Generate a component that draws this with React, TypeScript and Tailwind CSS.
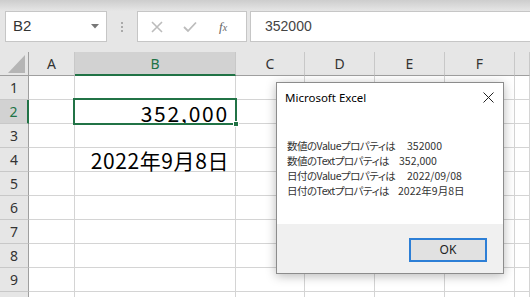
import React from "react";

const cols = [
  { name: "A", w: "w-[46px]" },
  { name: "B", w: "w-[161px]" },
  { name: "C", w: "w-[69px]" },
  { name: "D", w: "w-[70px]" },
  { name: "E", w: "w-[70px]" },
  { name: "F", w: "w-[70px]" },
  { name: "", w: "flex-1" },
];

const rows = [1, 2, 3, 4, 5, 6, 7, 8, 9, 10];

function Cell({ r, c }: { r: number; c: number }) {
  const col = cols[c];
  let content: React.ReactNode = null;
  if (r === 2 && c === 1) {
    content = (
      <>
        <span className="absolute right-[6px] top-[-2px] text-[21px] tracking-[1.8px] text-black [font-family:'Noto_Sans_CJK_JP',sans-serif]">
          352,000
        </span>
        <div className="absolute z-10 left-[-2px] top-[-2px] right-[-2px] bottom-[-2px] border-2 border-[#217346]" />
        <div className="absolute z-20 right-[-4px] bottom-[-4px] w-[6px] h-[6px] bg-[#217346] border border-white" />
      </>
    );
  }
  if (r === 4 && c === 1) {
    content = (
      <span className="absolute right-[6px] top-[-3px] text-[21px] tracking-[0.6px] text-black [font-family:'Noto_Sans_CJK_JP',sans-serif]">
        2022年9月8日
      </span>
    );
  }
  return (
    <div className={`${col.w} h-full relative bg-white border-r border-b border-[#d4d4d4]`}>
      {content}
    </div>
  );
}

const lines = [
  { label: "数値のValueプロパティは", value: "352000", w: "w-[120px]" },
  { label: "数値のTextプロパティは", value: "352,000", w: "w-[112px]" },
  { label: "日付のValueプロパティは", value: "2022/09/08", w: "w-[120px]" },
  { label: "日付のTextプロパティは", value: "2022年9月8日", w: "w-[111px]" },
];

export default function App() {
  return (
    <div className="w-[530px] h-[297px] bg-[#e6e6e6] overflow-hidden relative [font-family:'Noto_Sans',sans-serif]">
      {/* top band */}
      <div className="h-[11px] bg-gradient-to-b from-[#cdcdcd] to-[#e6e6e6]" />
      {/* formula bar */}
      <div className="h-[31px] flex items-stretch">
        <div className="ml-[5px] w-[102px] bg-white border border-[#c6c6c6] flex items-center justify-between pl-[7px] pr-[7px]">
          <span className="text-[15px] text-[#333] [font-family:'Liberation_Sans',sans-serif]">B2</span>
          <svg width="8" height="5" viewBox="0 0 8 5">
            <polygon points="0,0 8,0 4,4.5" fill="#777" />
          </svg>
        </div>
        <div className="w-[30px] flex flex-col items-center justify-center gap-[2px]">
          <div className="w-[2px] h-[2px] bg-[#aaa]" />
          <div className="w-[2px] h-[2px] bg-[#aaa]" />
          <div className="w-[2px] h-[2px] bg-[#aaa]" />
        </div>
        <div className="w-[110px] bg-white border border-[#c6c6c6] flex items-center">
          <svg className="ml-[13px]" width="12" height="12" viewBox="0 0 12 12">
            <path d="M1 1 L11 11 M11 1 L1 11" stroke="#bcbcbc" strokeWidth="1.6" />
          </svg>
          <svg className="ml-[20px]" width="14" height="12" viewBox="0 0 14 12">
            <path d="M1 6 L5 10 L13 1.5" stroke="#bcbcbc" strokeWidth="1.8" fill="none" />
          </svg>
          <span className="ml-[22px] text-[13px] italic text-[#666] [font-family:'Liberation_Serif',serif]">
            f<span className="text-[10px]">x</span>
          </span>
        </div>
        <div className="ml-[3px] flex-1 bg-white border-y border-l border-[#c6c6c6] flex items-center pl-[14px]">
          <span className="text-[14px] text-[#444] [font-family:'Liberation_Sans',sans-serif]">352000</span>
        </div>
      </div>
      <div className="h-[10px]" />
      {/* header row */}
      <div className="h-[24px] flex">
        <div className="w-[29px] h-full border-r border-b border-[#9f9f9f] relative">
          <svg className="absolute left-[7px] top-[2px]" width="19" height="20" viewBox="0 0 19 20">
            <polygon points="18,1 18,19 1,19" fill="#b5b5b5" />
          </svg>
        </div>
        {cols.map((c, i) => {
          const sel = c.name === "B";
          return (
            <div
              key={i}
              className={`${c.w} h-full flex items-center justify-center text-[14px] border-r border-[#c8c8c8] ${
                sel ? "bg-[#d2d2d2] text-[#217346] border-b-2 border-b-[#217346]" : "bg-[#e6e6e6] text-[#333] border-b border-b-[#9f9f9f]"
              }`}
            >
              {c.name}
            </div>
          );
        })}
      </div>
      {/* rows */}
      {rows.map((r) => (
        <div key={r} className="h-[24px] flex">
          <div
            className={`w-[29px] h-full flex items-center justify-center text-[14px] border-b border-[#c8c8c8] ${
              r === 2
                ? "bg-[#d2d2d2] text-[#217346] border-r-2 border-r-[#217346]"
                : "bg-[#e6e6e6] text-[#333] border-r border-r-[#9f9f9f]"
            }`}
          >
            {r < 10 ? r : ""}
          </div>
          {cols.map((_, c) => (
            <Cell key={c} r={r} c={c} />
          ))}
        </div>
      ))}

      {/* dialog */}
      <div className="absolute left-[276px] top-[82px] w-[228px] h-[192px] bg-white border border-[#8c8c8c] shadow-[0_2px_10px_rgba(0,0,0,0.28)] flex flex-col">
        <div className="h-[29px] flex items-center justify-between pl-[8px] pr-[9px]">
          <span className="text-[11.5px] text-black">Microsoft Excel</span>
          <svg width="11" height="11" viewBox="0 0 11 11">
            <path d="M0.5 0.5 L10.5 10.5 M10.5 0.5 L0.5 10.5" stroke="#222" strokeWidth="1" />
          </svg>
        </div>
        <div className="flex-1 pt-[26px] pl-[10px] text-[10.5px] leading-[15px] text-[#333] [font-family:'Noto_Sans_CJK_JP',sans-serif] [font-feature-settings:'palt']">
          {lines.map((l, i) => (
            <div key={i} className="whitespace-nowrap">
              <span className={`inline-block tracking-[-0.5px] ${l.w}`}>{l.label}</span>
              <span className="inline-block">{l.value}</span>
            </div>
          ))}
        </div>
        <div className="h-[49px] bg-[#f0f0f0] flex justify-end items-start pt-[14px] pr-[16px]">
          <div className="w-[78px] h-[24px] bg-[#e1e1e1] border-2 border-[#2d7fd6] flex items-center justify-center text-[12px] text-[#222]">
            OK
          </div>
        </div>
      </div>
    </div>
  );
}
